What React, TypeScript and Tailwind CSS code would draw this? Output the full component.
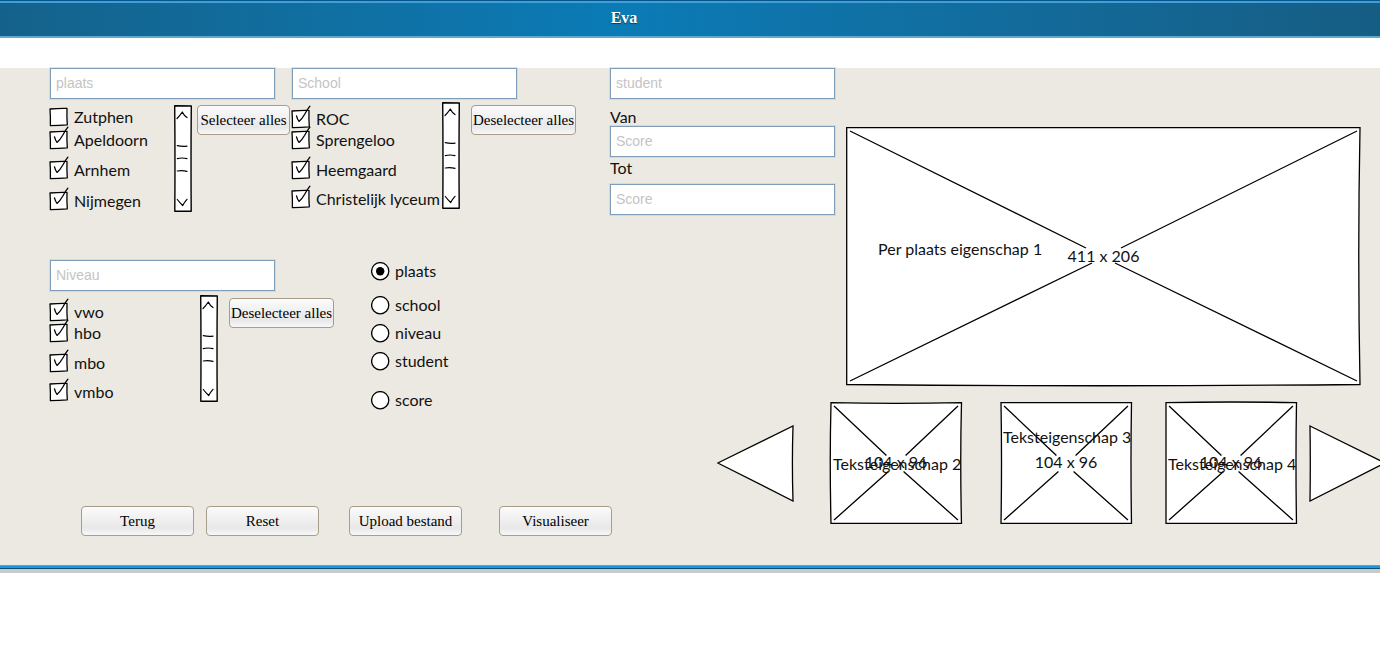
import type { ReactNode } from "react";

type Row = { label: string; checked: boolean; gap: string };

function TextField({ name, placeholder }: { name: string; placeholder: string }) {
  return (
    <input
      id={name}
      type="text"
      aria-label={placeholder}
      placeholder={placeholder}
      className="block h-[31px] w-[225px] shrink-0 border border-[#7f9db9] bg-white px-[5px] pb-0.5 font-['Liberation_Sans',sans-serif] text-sm text-black outline outline-1 outline-[#b9cbe2]/50 placeholder:text-[#c4c4c4]"
    />
  );
}

function Button({ children, className }: { children: ReactNode; className: string }) {
  return (
    <button
      type="button"
      className={`h-[30px] shrink-0 whitespace-nowrap rounded border border-[#aa9c8b] bg-linear-to-b from-[#fbfbfb] via-[#e8e8e8] via-75% to-[#f8f8f8] text-center font-['Liberation_Serif',serif] text-[15px] text-black ${className}`}
    >
      {children}
    </button>
  );
}

function CheckRow({ label, checked, gap }: Row) {
  return (
    <label className={`flex h-[21px] items-start gap-1.5 whitespace-nowrap leading-[18px] ${gap}`}>
      <span className="group relative block size-[18px] shrink-0">
        <input type="checkbox" defaultChecked={checked} className="absolute inset-0 m-0 size-full appearance-none" />
        <svg
          viewBox="0 0 18 18"
          className="pointer-events-none relative block size-[18px] overflow-visible"
          fill="none"
          stroke="#000"
          strokeWidth="1.3"
          strokeLinecap="round"
          strokeLinejoin="round"
        >
          <path d="M0 1 Q9 0.2 17 0.4 Q16.7 9 17.3 16.8 Q9 17.2 0.4 17.7 Q0.6 9 0 1 Z" fill="#fff" />
          <path className="hidden group-has-checked:block" d="M4.5 5.8 Q5.3 9 7 11.4 Q10.2 8.6 12.7 4.2 Q15.2 -0.5 17.9 -3.8" />
        </svg>
      </span>
      {label}
    </label>
  );
}

function ScrollStrip() {
  return (
    <svg
      viewBox="0 0 18 107"
      className="block h-[107px] w-[18px] shrink-0"
      fill="none"
      stroke="#000"
      strokeWidth="1.2"
      strokeLinecap="round"
      strokeLinejoin="round"
      aria-hidden="true"
    >
      <path d="M0.7 0.7 L17.3 1 Q16.8 50 17.2 106.2 L0.8 106.3 Q1.2 50 0.7 0.7 Z" fill="#fff" strokeWidth="1.4" />
      <path d="M3 13.5 Q6 10.5 8.3 7 Q10 10.5 13 12.6" />
      <path d="M3.3 40.7 Q8 41.8 13 41.2 M3.3 53.6 Q8 52.4 13 53.6 M3.3 66 Q8 65.2 13 66.3" />
      <path d="M3.3 94.5 Q6 98 8.7 100.5 Q10.5 97 13 94.3" />
    </svg>
  );
}

function RadioRow({ label, checked, gap }: Row) {
  return (
    <label className={`flex h-5 items-center gap-[5px] leading-5 ${gap}`}>
      <span className="group relative block size-[19px]">
        <input
          type="radio"
          name="grouping"
          defaultChecked={checked}
          className="absolute inset-0 m-0 size-full appearance-none"
        />
        <svg viewBox="0 0 19 19" className="pointer-events-none relative block size-[19px]">
          <circle cx="9.2" cy="9.2" r="8.6" fill="#fff" stroke="#000" strokeWidth="1.3" />
          <circle className="hidden group-has-checked:block" cx="9.2" cy="9.2" r="4.2" fill="#000" />
        </svg>
      </span>
      {label}
    </label>
  );
}

function Placeholder({
  size,
  caption,
  captionPlace,
  shape,
  cross,
  view,
  className,
}: {
  size: string;
  caption: string;
  captionPlace: string;
  shape: string;
  cross: string;
  view: string;
  className: string;
}) {
  return (
    <figure className={`relative flex items-center justify-center whitespace-nowrap ${className}`}>
      <svg
        viewBox={view}
        preserveAspectRatio="none"
        className="absolute inset-0 size-full overflow-visible"
        fill="none"
        stroke="#000"
        strokeWidth="1.3"
        aria-hidden="true"
      >
        <path d={shape} fill="#fff" />
        <path d={cross} />
      </svg>
      <span className="relative pb-0.5 leading-5">{size}</span>
      <figcaption className={`absolute leading-5 ${captionPlace}`}>{caption}</figcaption>
    </figure>
  );
}

const tileCross = "M4 4 L56 53 M127 4 L75 53 M4 117 L58 69 M127 117 L73 69";

const places: Row[] = [
  { label: "Zutphen", checked: false, gap: "mt-0" },
  { label: "Apeldoorn", checked: true, gap: "mt-0.5" },
  { label: "Arnhem", checked: true, gap: "mt-[9px]" },
  { label: "Nijmegen", checked: true, gap: "mt-2.5" },
];

const schools: Row[] = [
  { label: "ROC", checked: true, gap: "mt-0" },
  { label: "Sprengeloo", checked: true, gap: "mt-0" },
  { label: "Heemgaard", checked: true, gap: "mt-[9px]" },
  { label: "Christelijk lyceum", checked: true, gap: "mt-2" },
];

const levels: Row[] = [
  { label: "vwo", checked: true, gap: "mt-0" },
  { label: "hbo", checked: true, gap: "mt-0" },
  { label: "mbo", checked: true, gap: "mt-[9px]" },
  { label: "vmbo", checked: true, gap: "mt-2" },
];

const groupings: Row[] = [
  { label: "plaats", checked: true, gap: "mt-0" },
  { label: "school", checked: false, gap: "mt-3.5" },
  { label: "niveau", checked: false, gap: "mt-2" },
  { label: "student", checked: false, gap: "mt-2" },
  { label: "score", checked: false, gap: "mt-[19px]" },
];

export default function App() {
  return (
    <div className="overflow-x-hidden bg-white font-[Lato,sans-serif] text-base text-[#111]">
      <header className="border-t border-[#07568a]">
        <div className="flex h-[37px] items-center justify-center border-t-2 border-b-2 border-t-[#3f9fd8] border-b-[#5fa9d0] bg-linear-to-r from-[#14628b] via-[#0a7bb6] via-45% to-[#165d84] pr-[132px] pb-1">
          <h1 className="font-['Liberation_Serif',serif] text-base leading-5 font-bold text-white [text-shadow:0_1px_1px_#033e5e]">
            Eva
          </h1>
        </div>
      </header>

      <main className="mt-[30px] flex bg-[#ece9e2] pb-[29px] pl-[50px]">
        <section className="w-[560px] shrink-0">
          <div className="flex h-48">
            <div className="w-[242px] shrink-0">
              <TextField name="place" placeholder="plaats" />
              <div className="flex items-start pt-1.5">
                <div className="w-[124px] pt-[3px]">
                  {places.map((row) => (
                    <CheckRow key={row.label} {...row} />
                  ))}
                </div>
                <ScrollStrip />
                <Button className="ml-[5px] w-[93px]">Selecteer alles</Button>
              </div>
            </div>
            <div className="shrink-0">
              <TextField name="school" placeholder="School" />
              <div className="flex items-start pt-[3px]">
                <div className="w-[150px] pt-2">
                  {schools.map((row) => (
                    <CheckRow key={row.label} {...row} />
                  ))}
                </div>
                <ScrollStrip />
                <div className="pt-[3px] pl-[11px]">
                  <Button className="w-[105px]">Deselecteer alles</Button>
                </div>
              </div>
            </div>
          </div>

          <div className="flex h-[246px]">
            <div className="w-[321px] shrink-0">
              <TextField name="level" placeholder="Niveau" />
              <div className="flex items-start pt-1">
                <div className="w-[150px] pt-2">
                  {levels.map((row) => (
                    <CheckRow key={row.label} {...row} />
                  ))}
                </div>
                <ScrollStrip />
                <div className="pt-[3px] pl-[11px]">
                  <Button className="w-[105px]">Deselecteer alles</Button>
                </div>
              </div>
            </div>
            <div className="pt-px">
              {groupings.map((row) => (
                <RadioRow key={row.label} {...row} />
              ))}
            </div>
          </div>

          <div className="flex pl-[31px]">
            <Button className="w-[113px]">Terug</Button>
            <Button className="ml-3 w-[113px]">Reset</Button>
            <Button className="ml-[30px] w-[113px]">Upload bestand</Button>
            <Button className="ml-[37px] w-[113px]">Visualiseer</Button>
          </div>
        </section>

        <section className="min-w-0 flex-1">
          <div className="flex gap-[11px] pr-[19px]">
            <div className="shrink-0">
              <TextField name="student" placeholder="student" />
              <label htmlFor="score-from" className="block h-[27px] pt-2 leading-5">
                Van
              </label>
              <TextField name="score-from" placeholder="Score" />
              <label htmlFor="score-to" className="block h-[27px] pt-px leading-5">
                Tot
              </label>
              <TextField name="score-to" placeholder="Score" />
            </div>
            <Placeholder
              className="mt-[59px] h-[259px] min-w-0 flex-1"
              view="0 0 515 259"
              shape="M0.7 0.7 L514 0.7 Q511.5 130 514 257.5 Q257 260 0.7 257.5 Z"
              cross="M4 4 L240 121 M511 4 L275 121 M4 254 L246 136 M511 254 L269 136"
              size="411 x 206"
              caption="Per plaats eigenschap 1"
              captionPlace="left-8 top-28"
            />
          </div>

          <div className="mt-4 flex items-center pl-[107px]">
            <button type="button" aria-label="Vorige" className="shrink-0">
              <svg viewBox="0 0 77 77" className="block size-[77px]" fill="#fff" stroke="#000" strokeWidth="1.3">
                <path d="M0.8 38 L76 1 Q74.8 38 76 76 Z" />
              </svg>
            </button>
            <Placeholder
              className="ml-9 h-[122px] w-[132px] shrink-0"
              view="0 0 131 121"
              shape="M1 0.7 Q65 2 130.5 0.7 Q129 60 130.5 120.3 L1 120.3 Q-0.5 60 1 0.7 Z"
              cross={tileCross}
              size="104 x 96"
              caption="Teksteigenschap 2"
              captionPlace="left-[3px] top-[52px]"
            />
            <Placeholder
              className="ml-[38px] h-[122px] w-[132px] shrink-0"
              view="0 0 131 121"
              shape="M1 0.7 L130.5 0.7 Q129.5 60 130.5 120.3 L1 120.3 Q2 60 1 0.7 Z"
              cross={tileCross}
              size="104 x 96"
              caption="Teksteigenschap 3"
              captionPlace="left-[3px] top-[25px]"
            />
            <Placeholder
              className="ml-[33px] h-[122px] w-[132px] shrink-0"
              view="0 0 131 121"
              shape="M1 0.7 Q65 -0.7 130.5 0.7 Q129.5 60 130.5 120.3 L1 120.3 Z"
              cross={tileCross}
              size="104 x 96"
              caption="Teksteigenschap 4"
              captionPlace="left-[3px] top-[52px]"
            />
            <button type="button" aria-label="Volgende" className="ml-3 shrink-0">
              <svg viewBox="0 0 77 77" className="block size-[77px]" fill="#fff" stroke="#000" strokeWidth="1.3">
                <path d="M1 1 L76 38 L1 76 Q1.6 38 1 1 Z" />
              </svg>
            </button>
          </div>
        </section>
      </main>

      <footer className="border-t border-[#5fa3b8]">
        <div className="h-0.5 bg-[#1c97dc]" />
        <div className="h-px bg-[#05507c]" />
        <div className="h-1 bg-[#cbcaca]" />
      </footer>
    </div>
  );
}
